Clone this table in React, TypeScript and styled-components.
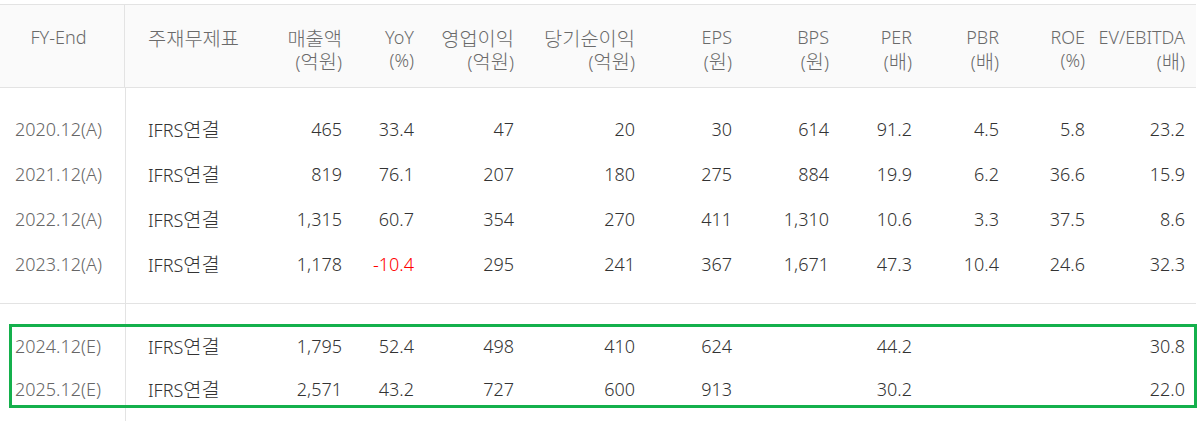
import React from "react";
import styled, { createGlobalStyle } from "styled-components";

const GlobalStyle = createGlobalStyle`
  html, body {
    margin: 0;
    padding: 0;
    background: #ffffff;
  }
  body {
    font-family: "Noto Sans", "Noto Sans CJK KR", sans-serif;
    font-size: 18px;
    color: #333333;
  }
`;

const COLS = "125px 130px 97px 72px 100px 121px 97px 97px 83px 87px 86px 100px";

const Table = styled.div`
  width: 1196px;
  min-height: 417px;
  margin-top: 4px;
  box-sizing: border-box;
  background: linear-gradient(#e3e3e3, #e3e3e3) no-repeat 125px 0 / 1px 100%;
`;

const HeaderRow = styled.div`
  display: grid;
  grid-template-columns: ${COLS};
  height: 84px;
  box-sizing: border-box;
  border-top: 1px solid #e3e3e3;
  border-bottom: 1px solid #e3e3e3;
  background: #fafafa;
`;

const HeadCell = styled.div<{ $align: "left" | "right" | "center"; $divider?: boolean }>`
  display: flex;
  flex-direction: column;
  align-items: ${(p) =>
    p.$align === "left" ? "flex-start" : p.$align === "center" ? "center" : "flex-end"};
  padding-top: 21px;
  padding-left: ${(p) => (p.$align === "left" ? "23px" : "0")};
  padding-right: ${(p) => (p.$align === "right" ? "10px" : p.$align === "center" ? "7px" : "0")};
  border-right: ${(p) => (p.$divider ? "1px solid #e3e3e3" : "none")};
  color: #6a6a6a;
  font-size: 18px;
  font-weight: 300;
  line-height: 23px;
  white-space: nowrap;
`;

const Line = styled.span`
  display: block;
  height: 23px;
`;

const Ko = styled.span`
  font-family: "Noto Sans CJK KR", sans-serif;
  font-size: 19.8px;
  font-weight: 300;
`;

const Group = styled.div<{ $pt: number; $pb: number; $divider?: boolean }>`
  position: relative;
  padding-top: ${(p) => p.$pt}px;
  padding-bottom: ${(p) => p.$pb}px;
  border-bottom: ${(p) => (p.$divider ? "1px solid #e3e3e3" : "none")};
`;

const Row = styled.div<{ $h: number }>`
  display: grid;
  grid-template-columns: ${COLS};
  height: ${(p) => p.$h}px;
  align-items: center;
`;

const Cell = styled.div<{ $align: "left" | "right"; $tone?: "period" | "neg" }>`
  text-align: ${(p) => p.$align};
  padding-left: ${(p) => (p.$align === "left" ? (p.$tone === "period" ? "15px" : "23px") : "0")};
  padding-right: ${(p) => (p.$align === "right" ? "10px" : "0")};
  color: ${(p) => (p.$tone === "period" ? "#666666" : p.$tone === "neg" ? "#ff0000" : "#333333")};
  font-size: 18px;
  font-weight: 300;
  line-height: 22px;
  height: 22px;
  white-space: nowrap;
`;

const Highlight = styled.div`
  position: absolute;
  left: 9px;
  top: 20px;
  width: 1188px;
  height: 84px;
  box-sizing: border-box;
  border: 3px solid #14b04c;
  pointer-events: none;
`;

const Txt: React.FC<{ s: string }> = ({ s }) => (
  <>
    {s
      .split(/([\uAC00-\uD7A3]+)/)
      .filter((p) => p !== "")
      .map((p, i) => (/[\uAC00-\uD7A3]/.test(p) ? <Ko key={i}>{p}</Ko> : <React.Fragment key={i}>{p}</React.Fragment>))}
  </>
);

const headers: { t: string; u?: string; align: "left" | "right" | "center" }[] = [
  { t: "FY-End", align: "center" },
  { t: "주재무제표", align: "left" },
  { t: "매출액", u: "(억원)", align: "right" },
  { t: "YoY", u: "(%)", align: "right" },
  { t: "영업이익", u: "(억원)", align: "right" },
  { t: "당기순이익", u: "(억원)", align: "right" },
  { t: "EPS", u: "(원)", align: "right" },
  { t: "BPS", u: "(원)", align: "right" },
  { t: "PER", u: "(배)", align: "right" },
  { t: "PBR", u: "(배)", align: "right" },
  { t: "ROE", u: "(%)", align: "right" },
  { t: "EV/EBITDA", u: "(배)", align: "right" },
];

const actual: string[][] = [
  ["2020.12(A)", "IFRS연결", "465", "33.4", "47", "20", "30", "614", "91.2", "4.5", "5.8", "23.2"],
  ["2021.12(A)", "IFRS연결", "819", "76.1", "207", "180", "275", "884", "19.9", "6.2", "36.6", "15.9"],
  ["2022.12(A)", "IFRS연결", "1,315", "60.7", "354", "270", "411", "1,310", "10.6", "3.3", "37.5", "8.6"],
  ["2023.12(A)", "IFRS연결", "1,178", "-10.4", "295", "241", "367", "1,671", "47.3", "10.4", "24.6", "32.3"],
];

const estimate: string[][] = [
  ["2024.12(E)", "IFRS연결", "1,795", "52.4", "498", "410", "624", "", "44.2", "", "", "30.8"],
  ["2025.12(E)", "IFRS연결", "2,571", "43.2", "727", "600", "913", "", "30.2", "", "", "22.0"],
];

const DataRow: React.FC<{ cells: string[]; h: number }> = ({ cells, h }) => (
  <Row $h={h}>
    {cells.map((c, i) => (
      <Cell
        key={i}
        $align={i < 2 ? "left" : "right"}
        $tone={i === 0 ? "period" : c.startsWith("-") ? "neg" : undefined}
      >
        <Txt s={c} />
      </Cell>
    ))}
  </Row>
);

export default function App() {
  return (
    <>
      <GlobalStyle />
      <Table>
        <HeaderRow>
          {headers.map((h, i) => (
            <HeadCell key={i} $align={h.align} $divider={i === 0}>
              <Line>
                <Txt s={h.t} />
              </Line>
              {h.u && (
                <Line>
                  <Txt s={h.u} />
                </Line>
              )}
            </HeadCell>
          ))}
        </HeaderRow>
        <Group $pt={18} $pb={17} $divider>
          {actual.map((r, i) => (
            <DataRow key={i} cells={r} h={45} />
          ))}
        </Group>
        <Group $pt={20} $pb={20}>
          {estimate.map((r, i) => (
            <DataRow key={i} cells={r} h={43} />
          ))}
          <Highlight />
        </Group>
      </Table>
    </>
  );
}
